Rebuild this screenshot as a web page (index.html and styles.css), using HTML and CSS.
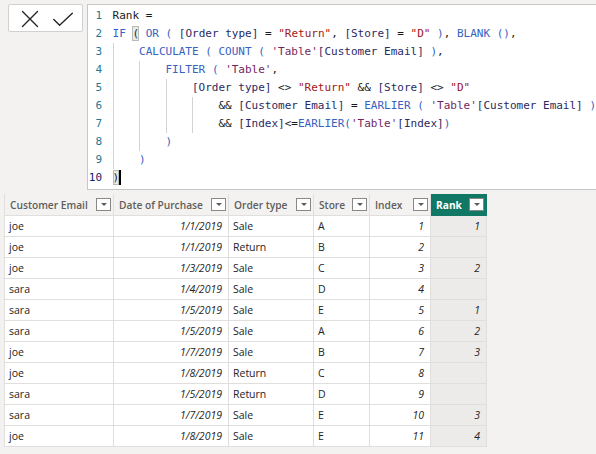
FILE: index.html
```html
<!DOCTYPE html>
<html>
<head>
<meta charset="utf-8">
<link rel="stylesheet" href="styles.css">
</head>
<body>
<div class="app">
  <div class="top">
    <div class="btns">
      <svg class="ico ico-x" width="20" height="20" viewBox="0 0 20 20"><path d="M2.5 2.5 L17.5 17.5 M17.5 2.5 L2.5 17.5" /></svg>
      <svg class="ico ico-ok" width="20" height="20" viewBox="0 0 20 20"><path d="M0.8 10.5 L6.6 16.2 L19.3 4.3" /></svg>
    </div>
    <div class="editor">
      <div class="gutter">
        <div class="ln">1</div><div class="ln">2</div><div class="ln">3</div><div class="ln">4</div><div class="ln">5</div><div class="ln">6</div><div class="ln">7</div><div class="ln">8</div><div class="ln">9</div><div class="ln ln-active">10</div>
      </div>
      <div class="code">
        <div class="line">Rank =</div>
        <div class="line"><span class="k">IF</span> <span class="match">(</span> <span class="k">OR</span> <span class="p">(</span> <span class="c">[Order type]</span> = <span class="s">"Return"</span>, <span class="c">[Store]</span> = <span class="s">"D"</span> <span class="p">)</span>, <span class="k">BLANK</span> <span class="p">()</span>,</div>
        <div class="line"><span class="ind"></span><span class="k">CALCULATE</span> <span class="p">(</span> <span class="k">COUNT</span> <span class="p">(</span> <span class="t">'Table'</span><span class="c">[Customer Email]</span> <span class="p">)</span>,</div>
        <div class="line"><span class="ind"></span><span class="ind"></span><span class="k">FILTER</span> <span class="p">(</span> <span class="t">'Table'</span>,</div>
        <div class="line"><span class="ind"></span><span class="ind"></span><span class="ind"></span><span class="c">[Order type]</span> &lt;&gt; <span class="s">"Return"</span> &amp;&amp; <span class="c">[Store]</span> &lt;&gt; <span class="s">"D"</span></div>
        <div class="line"><span class="ind"></span><span class="ind"></span><span class="ind"></span><span class="ind"></span>&amp;&amp; <span class="c">[Customer Email]</span> = <span class="k">EARLIER</span> <span class="p">(</span> <span class="t">'Table'</span><span class="c">[Customer Email]</span> <span class="p">)</span></div>
        <div class="line"><span class="ind"></span><span class="ind"></span><span class="ind"></span><span class="ind"></span>&amp;&amp; <span class="c">[Index]</span>&lt;=<span class="k">EARLIER</span><span class="p">(</span><span class="t">'Table'</span><span class="c">[Index]</span><span class="p">)</span></div>
        <div class="line"><span class="ind"></span><span class="ind"></span><span class="p">)</span></div>
        <div class="line"><span class="ind"></span><span class="p">)</span></div>
        <div class="line"><span class="match">)</span><span class="cursor"></span></div>
      </div>
    </div>
  </div>

  <div class="grid">
    <div class="h"><span>Customer Email</span><i class="dd"></i></div>
    <div class="h"><span>Date of Purchase</span><i class="dd"></i></div>
    <div class="h"><span>Order type</span><i class="dd"></i></div>
    <div class="h"><span>Store</span><i class="dd"></i></div>
    <div class="h"><span>Index</span><i class="dd"></i></div>
    <div class="h h-sel"><span>Rank</span><i class="dd"></i></div>

    <div class="d">joe</div><div class="d n">1/1/2019</div><div class="d">Sale</div><div class="d">A</div><div class="d n">1</div><div class="d n r">1</div>
    <div class="d">joe</div><div class="d n">1/1/2019</div><div class="d">Return</div><div class="d">B</div><div class="d n">2</div><div class="d n r"></div>
    <div class="d">joe</div><div class="d n">1/3/2019</div><div class="d">Sale</div><div class="d">C</div><div class="d n">3</div><div class="d n r">2</div>
    <div class="d">sara</div><div class="d n">1/4/2019</div><div class="d">Sale</div><div class="d">D</div><div class="d n">4</div><div class="d n r"></div>
    <div class="d">sara</div><div class="d n">1/5/2019</div><div class="d">Sale</div><div class="d">E</div><div class="d n">5</div><div class="d n r">1</div>
    <div class="d">sara</div><div class="d n">1/5/2019</div><div class="d">Sale</div><div class="d">A</div><div class="d n">6</div><div class="d n r">2</div>
    <div class="d">joe</div><div class="d n">1/7/2019</div><div class="d">Sale</div><div class="d">B</div><div class="d n">7</div><div class="d n r">3</div>
    <div class="d">joe</div><div class="d n">1/8/2019</div><div class="d">Return</div><div class="d">C</div><div class="d n">8</div><div class="d n r"></div>
    <div class="d">sara</div><div class="d n">1/5/2019</div><div class="d">Return</div><div class="d">D</div><div class="d n">9</div><div class="d n r"></div>
    <div class="d">sara</div><div class="d n">1/7/2019</div><div class="d">Sale</div><div class="d">E</div><div class="d n">10</div><div class="d n r">3</div>
    <div class="d">joe</div><div class="d n">1/8/2019</div><div class="d">Sale</div><div class="d">E</div><div class="d n">11</div><div class="d n r">4</div>
  </div>
</div>
</body>
</html>
```

FILE: styles.css
```css
html, body {
  margin: 0;
  padding: 0;
  background: #f3f2f1;
}

.app {
  width: 596px;
  height: 454px;
  overflow: hidden;
}

/* ---------- formula bar ---------- */
.top {
  display: flex;
  align-items: flex-start;
  padding: 4px 0 0 8px;
}

.btns {
  box-sizing: border-box;
  width: 75px;
  height: 28px;
  background: #ffffff;
  border: 1px solid #d2d0ce;
  border-radius: 2px;
  display: flex;
  align-items: center;
  padding-left: 10.5px;
  gap: 13px;
  margin-right: 4px;
}

.ico {
  display: block;
  margin-top: 1px;
  fill: none;
  stroke: #252423;
  stroke-width: 1.4;
  stroke-linecap: round;
  stroke-linejoin: round;
}

.editor {
  flex: 1;
  box-sizing: border-box;
  height: 186px;
  background: #ffffff;
  border-top: 1px solid #c8c6c4;
  border-left: 1px solid #c8c6c4;
  border-bottom: 1px solid #c8c6c4;
  display: flex;
  padding-top: 2px;
  font-family: "DejaVu Sans Mono", "Liberation Mono", monospace;
  font-size: 11px;
  line-height: 18px;
}

.gutter {
  width: 2ch;
  margin-left: 1px;
  text-align: right;
  color: #237893;
}

.ln-active {
  color: #0b216f;
}

.code {
  margin-left: 10.5px;
  color: #1a1a1a;
}

.line {
  height: 18px;
  white-space: pre;
}

.ind {
  display: inline-block;
  width: 4ch;
  height: 18px;
  vertical-align: top;
  box-shadow: inset 1px 0 0 #d3d3d3;
}

.k { color: #3762c0; }
.p { color: #3762c0; }
.s { color: #a31515; }
.t { color: #74245e; }
.c { color: #2a2a62; }

.match {
  display: inline-block;
  height: 15px;
  line-height: 15px;
  vertical-align: top;
  margin-top: 1px;
  box-sizing: border-box;
  background: #e7ece6;
  outline: 1px solid #b9bcb6;
  outline-offset: -1px;
  color: #2b2230;
}

.cursor {
  display: inline-block;
  width: 2px;
  height: 15px;
  margin-top: 1px;
  vertical-align: top;
  background: #000000;
}

/* ---------- data grid ---------- */
.grid {
  display: grid;
  grid-template-columns: 109px 115px 85px 56px 61px 56px;
  grid-auto-rows: 21px;
  grid-template-rows: 22px;
  margin: 4px 0 0 4px;
  width: max-content;
  border-left: 1px solid #e1dfdd;
  font-family: "Open Sans", "Noto Sans", sans-serif;
  font-size: 10.5px;
}

.grid > div {
  box-sizing: border-box;
  border-right: 1px solid #e1dfdd;
  border-bottom: 1px solid #e1dfdd;
  display: flex;
  align-items: center;
  white-space: nowrap;
  overflow: hidden;
}

.h {
  background: #f3f2f1;
  color: #605e5c;
  font-weight: 600;
  justify-content: space-between;
  padding: 0 2px 0 5px;
  font-size: 10.2px;
}

.h-sel {
  background: #117865;
  color: #ffffff;
  font-weight: 700;
  border-right-color: #117865 !important;
  border-bottom-color: #117865 !important;
}

.dd {
  box-sizing: border-box;
  width: 15px;
  height: 13px;
  background: #ffffff;
  border: 1px solid #8a8886;
  display: flex;
  align-items: center;
  justify-content: center;
  flex: none;
}

.dd::after {
  content: "";
  width: 0;
  height: 0;
  border-left: 3px solid transparent;
  border-right: 3px solid transparent;
  border-top: 3px solid #605e5c;
}

.d {
  background: #ffffff;
  color: #252423;
  padding: 0 4px;
}

.n {
  justify-content: flex-end;
  font-style: italic;
  padding-right: 6px;
}

.r {
  background: #edebe9 !important;
}
```
